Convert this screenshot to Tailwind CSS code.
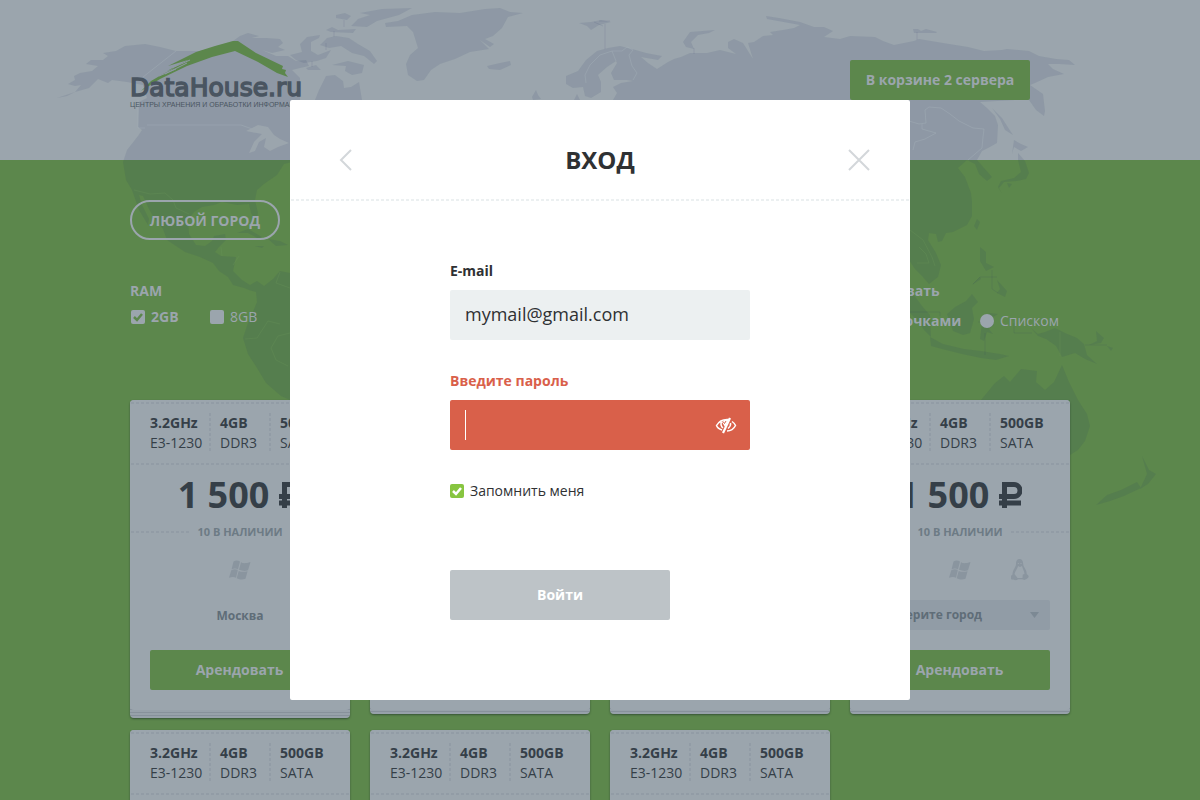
<!DOCTYPE html>
<html lang="ru">
<head>
<meta charset="utf-8">
<meta name="viewport" content="width=device-width, initial-scale=1">
<title>DataHouse.ru — Вход</title>
<script src="https://cdn.jsdelivr.net/npm/@tailwindcss/browser@4"></script>
</head>
<body class="h-screen overflow-hidden bg-[#5c874c] font-['Open_Sans','Noto_Sans',sans-serif] text-sm leading-5 text-[#353f48]">

<div class="relative h-full overflow-hidden">
  <!-- World map behind the header and the listing -->
  <div class="absolute inset-x-0 top-0 h-40 bg-[#9ba5ad]"></div>
  <svg class="absolute top-0 left-1/2 -translate-x-1/2" width="1200" height="800" viewBox="0 0 1200 800" aria-hidden="true">
    <g fill="#263560" fill-opacity=".11">
      <path d="M57 98L67 96L75 92L81 85L75 86L68 84L75 80L74 76L80 73L92 71L98 66L86 64L91 60L103 60L108 56L103 53L116 51L125 46L145 44L160 47L176 51L200 51L215 47L233 41L240 36L248 33L259 36L252 38L266 38L280 39L283 43L278 47L285 50L272 53L262 50L276 56L288 56L296 61L306 60L309 66L300 68L292 70L300 78L300 94L300 160L284 164L277 175L264 184L257 190L255 200L258 213L256 221L251 213L249 204L237 205L222 202L214 205L202 207L194 212L188 220L189 234L196 245L205 246L212 241L214 236L225 234L226 240L219 247L215 252L221 256L236 257L233 271L242 280L250 285L257 281L264 286L273 279L280 271L290 273L290 400L281 396L266 383L257 368L248 354L243 338L248 323L252 314L257 302L256 292L249 290L244 288L233 285L228 277L219 271L213 263L200 257L185 252L167 240L163 229L154 218L149 209L143 196L139 195L142 205L149 219L148 225L139 210L132 190L126 180L123 162L127 150L138 136L142 130L138 127L139 102L147 98L143 85L127 82L112 80L108 83L98 79L89 88L75 92Z"/>
      <path d="M315 100L319 90L326 76L335 75L343 81L344 88L351 87L359 82L362 100Z"/>
      <path d="M385 23L398 21L412 15L435 12L460 13L485 9L500 8L510 12L523 13L508 17L502 28L493 36L485 39L494 44L490 47L480 40L489 49L470 52L455 59L440 64L431 70L424 80L417 81L408 75L406 64L410 55L418 48L413 32L407 26L386 27Z"/>
      <path d="M336 15L345 13L351 16L347 20L336 18ZM360 13L382 9L412 8L399 15L377 21L367 27L351 26L358 19L370 15ZM326 30L332 27L338 30L356 29L353 33L331 32ZM320 45L327 38L336 36L349 38L358 44L370 51L377 61L374 64L364 56L352 53L341 46L329 48ZM290 55L302 52L300 44L307 37L320 35L319 38L311 42L311 51L318 55L331 50L326 58L317 61L304 63L296 60ZM332 65L348 61L364 65L362 73L352 75L345 71L346 66ZM306 68L316 65L321 70L308 70Z"/>
      <path d="M487 66L500 63L510 61L511 65L500 70L489 69ZM579 23L591 22L601 20L611 22L599 25L591 30L587 26ZM532 97L536 90L538 95L541 99L533 100Z"/>
      <path d="M566 76L578 71L586 60L597 51L608 48L620 46L632 49L646 53L662 56L658 60L641 57L648 63L657 69L668 62L674 59L681 57L690 53L707 53L720 50L736 54L728 48L728 42L734 39L743 43L748 51L753 59L748 43L754 42L763 36L773 35L770 32L783 30L794 28L800 25L767 19L766 16L779 18L800 22L814 27L824 27L833 31L824 37L840 39L850 36L875 37L883 41L894 45L914 41L919 39L943 43L968 47L984 51L1002 50L1007 49L1029 51L1039 56L1056 59L1069 60L1075 65L1059 64L1048 64L1053 69L1064 74L1048 77L1035 83L1030 85L1043 94L1045 111L1044 116L1036 110L1029 100L1015 100L980 102L987 108L995 116L998 125L997 143L988 148L982 151L977 160L984 168L992 177L987 181L979 174L975 164L967 160L958 168L965 177L971 193L972 202L972 216L967 225L953 232L946 233L942 241L938 242L936 234L929 233L928 240L936 253L941 265L938 277L929 284L922 276L915 269L909 260L909 100L824 100L613 100L617 93L613 87L621 83L633 81L627 80L614 80L611 73L617 63L616 61L607 67L598 75L601 82L601 92L591 98L585 96L583 87L573 88L566 84Z"/>
      <path d="M574 100L577 94L580 100ZM683 42L690 32L715 30L709 33L698 35L691 42L694 49L686 47ZM913 29L918 29L921 31L926 29L937 32L936 33L914 33Z"/>
      <path d="M992 108L1002 118L1009 129L1013 135L1005 130L1000 119ZM1014 140L1021 144L1028 147L1021 151L1014 147L1012 154ZM1018 153L1025 161L1029 173L1026 179L1017 181L1004 182L999 188L1002 194L998 187L1001 181L1014 178L1021 172L1018 160ZM1007 183L1012 184L1009 188ZM977 219L980 222L977 230L974 226ZM980 247L986 252L986 263L994 267L986 271L980 261ZM997 280L1007 291L1005 297L997 293L1000 289ZM972 285L980 277L981 279Z"/>
      <path d="M909 295L914 295L922 306L930 315L931 337L924 330L917 320L909 312ZM930 337L943 344L964 349L981 351L1000 354L1009 356L996 360L981 358L962 354L942 349L931 346ZM947 314L955 307L966 301L972 294L978 302L972 308L974 319L970 333L963 335L953 331ZM981 331L983 317L990 313L998 314L990 319L994 325L989 329L993 334L987 332L984 341L980 339Z"/>
      <path d="M1031 328L1038 334L1045 332L1055 328L1065 333L1077 338L1084 344L1087 355L1097 364L1085 359L1075 353L1062 357L1056 346L1046 339L1038 336ZM1096 331L1104 338L1101 343L1089 345L1097 341ZM1107 346L1113 348L1111 351Z"/>
      <path d="M981 400L995 383L1004 376L1010 382L1021 369L1037 371L1036 382L1045 390L1054 382L1062 365L1069 382L1078 400L1087 414L1090 426L1085 441L1078 450L1070 455L1000 455L970 430ZM1142 456L1149 470L1156 474L1148 484L1140 489L1147 474ZM1137 482L1141 488L1124 496L1110 501L1096 505L1107 495L1121 490Z"/>
      <path d="M237 233L248 229L262 237L259 239L248 233ZM268 239L280 241L288 245L276 246ZM255 246L264 246L262 248Z"/>
    </g>
    <g fill="none" stroke="#263560" stroke-opacity=".1">
      <path d="M605 24V49M594 22L603 26M610 21H599M344 20V27M334 31V37M326 43V50M312 61V67M694 48V54M917 32V40M1014 323V333H1032M1085 345H1100L1107 345M985 333V355M973 284L980 277H997M992 270V289L998 293M909 312H940V316M978 322H990"/>
    </g>
    <g fill="none" stroke="#a5b1b9" stroke-opacity=".4">
      <path d="M176 51L143 77M147 125L241 125L255 130M138 100V128H145"/>
      <path d="M586 83L585 75L590 65L600 55L612 51L622 51L627 47L633 50L629 55L632 66L637 73L633 80M612 51L616 61"/>
      <path d="M909 121L919 124L926 123L925 110L929 107L941 108L950 114L959 121L973 128L984 129L983 137L982 148L968 160M922 124L922 129L936 133L925 139L915 142L913 150"/>
    </g>
    <g fill="none" stroke="#6b965b" stroke-opacity=".3">
      <path d="M134 190L150 194L165 193L173 200L176 208L189 214M221 247L222 256M239 256L233 265M280 272L276 283L290 288M245 339L257 338L268 321L280 324M290 333L278 336L271 348L276 360L288 366M1060 332V356M910 230L923 240L932 257L935 266M919 247L926 254L929 263L917 263"/>
    </g>
    <path fill="#9ba5ad" d="M246 131L258 125L268 127L274 135L280 139L289 143L278 147L270 151L264 147L266 138L259 142L255 151L249 153L254 142L262 134Z"/>
  </svg>

  <div class="relative mx-auto w-full max-w-[940px]">
    <header class="flex h-40 items-start justify-between">
      <a href="#" class="relative block pt-[73px] text-[#4a5561]" aria-label="DataHouse.ru">
        <svg class="absolute top-10 left-0" width="170" height="55" viewBox="130 40 170 55" aria-hidden="true">
          <path fill="#5c874c" d="M141 91L151 81L163 74L175 68L167 71L188 60L168 66L196 52L215 46L233 41L238 41L256 53L283 66L282 69L286 70L285 73L288 77L277 73L258 62L235 51L212 57L187 66L160 79Z"/>
          <path stroke="#8e98a4" d="M165 74L187 63M172 68L190 60M159 76L176 69"/>
        </svg>
        <span class="relative block font-['DejaVu_Sans',sans-serif] text-[25px] leading-[29px] [-webkit-text-stroke:1.5px_currentColor]">DataHouse.ru</span>
        <span class="relative block font-['Liberation_Sans',sans-serif] text-[7px] leading-[6px] whitespace-nowrap">ЦЕНТРЫ ХРАНЕНИЯ И ОБРАБОТКИ ИНФОРМАЦИИ</span>
      </a>
      <button class="mt-15 mr-10 h-10 w-45 rounded-xs bg-[#5c874c] font-bold text-[#9ba5ad]">В корзине 2 сервера</button>
    </header>

    <section class="h-60 pt-10 text-[#9ba5ad]">
      <button class="h-10 w-[150px] rounded-full border-2 border-[#9ba5ad] pt-[2px] font-bold">ЛЮБОЙ ГОРОД</button>
      <div class="mt-10 flex justify-between">
        <fieldset>
          <legend class="pt-px font-bold">RAM</legend>
          <div class="flex pt-[6px]">
            <label class="relative flex w-20 items-center gap-[6px] font-bold">
              <input type="checkbox" checked class="absolute left-0 size-[14px] appearance-none">
              <svg width="15" height="14" viewBox="0 0 15 14" aria-hidden="true"><rect x="1" width="14" height="14" rx="2" fill="#9ba5ad"/><path d="M4 7L7 10L12 4" fill="none" stroke="#5c874c" stroke-width="2.500"/></svg>
              2GB
            </label>
            <label class="flex items-center gap-[6px]">
              <input type="checkbox" class="size-[14px] appearance-none rounded-xs bg-[#9ba5ad]">
              8GB
            </label>
          </div>
        </fieldset>
        <fieldset class="w-[220px]">
          <legend class="pt-px font-bold">Показывать</legend>
          <div class="flex justify-between pt-[10px] pr-[11px]">
            <label class="flex items-center gap-[6px] font-bold">
              <input type="radio" name="view" checked class="size-[14px] appearance-none rounded-full bg-[#9ba5ad]">
              Карточками
            </label>
            <label class="flex items-center gap-[6px]">
              <input type="radio" name="view" class="size-[14px] appearance-none rounded-full bg-[#9ba5ad]">
              Списком
            </label>
          </div>
        </fieldset>
      </div>
    </section>

    <main id="cards" class="grid grid-cols-4 gap-5"></main>
  </div>
</div>

<template id="card">
  <article class="relative h-[310px]">
    <div data-stack class="absolute inset-x-0 top-0 rounded-sm bg-[repeating-linear-gradient(to_top,#97a1aa_0_2px,#87919b_2px_3px)] shadow-[0_1px_2px_rgba(30,50,40,0.6)]"></div>
    <div class="relative h-full rounded-sm bg-[#9ba5ad] pt-[2px]">
      <div class="mx-px h-[2px] bg-[repeating-linear-gradient(to_right,#929ca6_0_3px,transparent_3px_5px)]"></div>
      <div class="flex h-[59px] px-5 pt-[9px]">
        <div class="w-[59px]"><b>3.2GHz</b><br>E3-1230</div>
        <div class="h-[38px] w-[2px] bg-[repeating-linear-gradient(to_bottom,#929ca6_0_3px,transparent_3px_5px)]"></div>
        <div class="w-[58px] pl-[9px]"><b>4GB</b><br>DDR3</div>
        <div class="h-[38px] w-[2px] bg-[repeating-linear-gradient(to_bottom,#929ca6_0_3px,transparent_3px_5px)]"></div>
        <div class="pl-[9px]"><b>500GB</b><br>SATA</div>
      </div>
      <div class="mx-px h-[2px] bg-[repeating-linear-gradient(to_right,#929ca6_0_3px,transparent_3px_5px)]"></div>
      <div class="flex h-[57px] items-center justify-center gap-[10px] pt-[2px] text-4xl font-bold">1 500
        <svg width="23" height="26" viewBox="0 0 23 26" role="img" aria-label="₽"><path d="M5.500 26V2.500H15a5.500 5.500 0 0 1 0 12H0M0 21H22" fill="none" stroke="currentColor" stroke-width="5"/></svg>
      </div>
      <div class="flex items-center gap-2 px-px text-[11px] font-bold text-[#6d7b85]">
        <span class="h-[2px] flex-1 bg-[repeating-linear-gradient(to_right,#929ca6_0_3px,transparent_3px_5px)]"></span>10 В НАЛИЧИИ<span class="h-[2px] flex-1 bg-[repeating-linear-gradient(to_right,#929ca6_0_3px,transparent_3px_5px)]"></span>
      </div>
      <div class="flex h-[58px] items-center pb-[2px] pl-[99px] text-[#8a959f]">
        <svg width="22" height="20" viewBox="0 0 22 20" fill="currentColor" aria-hidden="true"><path d="M4.500 1.500C7 .1 9 .4 11 1.500L9 9.300C7 8.200 5 8.200 2.600 9.300ZM12 2.300C14 3.500 17 3.500 21.500 2L19 10.300C16 11.500 13 11 10 9.800ZM2.300 10.300C4.500 9.100 7 9.100 8.800 10.100L7 17.800C5 16.700 3 16.700 0 17.800ZM9.700 10.900C12 12 15 12.200 18.600 11.300L16.500 18.800C13 20 11 19.800 7.700 18.300Z"/></svg>
        <svg data-linux class="ml-10" width="18" height="22" viewBox="1 0 18 22" aria-hidden="true"><path fill="currentColor" d="M9.500 0C12 0 13.200 2 13.200 5C13.200 8 17 11 16.700 15C19.500 17 19.500 18.500 15.500 20.500C14 21.500 13 20.500 12 20.300H8C6 22 4 21 1 20.300C.5 18 .5 17 2.500 15.500C2.500 11 6 8 6 5C6 2 7 0 9.500 0Z"/><path fill="#9ba5ad" d="M8 7L10 8L12 7C12.500 10 14.500 12 14.500 15L12.800 15.500L12.500 19H7.500L4.500 15C5 12 7.500 10 8 7Z"/><path fill="#9ba5ad" d="M7.800 4h1v1h-1zM10.500 4h1v1h-1z"/></svg>
      </div>
      <div data-city class="h-[30px] px-5 text-center text-xs leading-8 font-bold text-[#5f6d78]"></div>
      <div class="px-5 pt-5"><button class="h-10 w-full rounded-xs bg-[#5c874c] pr-px font-bold text-[#9ba5ad]">Арендовать</button></div>
    </div>
  </article>
</template>

<!-- Sign-in dialog -->
<div class="fixed inset-0 flex items-center justify-center">
  <form role="dialog" aria-modal="true" aria-labelledby="title" class="h-[600px] w-[620px] rounded-xs bg-white text-[#2f3133]">
    <div class="flex h-[99px] items-center justify-between px-10 pt-5">
      <button type="button" aria-label="Назад" class="w-[22px]"><svg class="ml-[9px]" width="13" height="22" viewBox="0 0 13 22" fill="none" stroke="#d3d7da" stroke-width="2"><path d="M12 1L2 11L12 21"/></svg></button>
      <h1 id="title" class="text-2xl font-bold">ВХОД</h1>
      <button type="button" aria-label="Закрыть"><svg width="22" height="22" viewBox="0 0 22 22" fill="none" stroke="#d3d7da" stroke-width="2"><path d="M1 1L21 21M21 1L1 21"/></svg></button>
    </div>
    <div class="h-[2px] bg-[repeating-linear-gradient(to_right,transparent_0_1px,#ecf0f1_1px_4px,transparent_4px_5px)]"></div>
    <div class="ml-40 w-[300px] pt-15">
      <label for="email" class="block font-bold">E-mail</label>
      <input id="email" type="email" value="mymail@gmail.com" class="mt-[9px] block h-[50px] w-full rounded-xs bg-[#ecf0f1] px-[15px] pb-[2px] text-lg">
      <label for="password" class="mt-[30px] block pt-px font-bold text-[#d9604a]">Введите пароль</label>
      <div class="mt-[9px] flex h-[50px] items-center rounded-xs bg-[#d9604a] px-[15px]">
        <span class="h-[30px] w-px bg-white"></span>
        <input id="password" type="password" class="h-full min-w-0 flex-1 text-lg text-white outline-none">
        <button type="button" aria-label="Показать пароль" class="-mr-[2px]"><svg width="22" height="18" viewBox="0 0 22 18" fill="none" stroke="#fff" stroke-width="1.500"><path d="M7 14C4 13 2 11 1.500 9.500C4 5 9 3 14 3.500M12 15C16 15 19 12.500 20.500 9.500C20 8 18.500 6.500 17 5.500M6.500 5.500C5.500 8.500 6 10.500 8 12M15.500 7C16 9.500 15 11 13 12.500"/><path stroke-width="2.200" d="M8 17L15 2"/><path fill="#fff" stroke="none" d="M7 6L10 11L14 3L9 4Z"/><path stroke="#d9604a" stroke-width="1" d="M8 5.500L9.500 7.500L11 5"/></svg></button>
      </div>
      <label class="relative mt-[31px] flex items-center gap-[6px]">
        <input type="checkbox" checked class="absolute left-0 size-[14px] appearance-none">
        <svg width="14" height="14" viewBox="0 0 14 14" aria-hidden="true"><rect width="14" height="14" rx="2" fill="#87c540"/><path d="M3 7L6 10L11 4" fill="none" stroke="#fff" stroke-width="2.500"/></svg>
        Запомнить меня
      </label>
      <button type="submit" class="mt-[69px] h-[50px] w-[220px] rounded-xs bg-[#bdc3c7] font-bold text-white">Войти</button>
    </div>
  </form>
</div>

<script>
  const list = document.getElementById('cards');
  const tpl = document.getElementById('card');
  const select = '<select aria-label="Город" class="block h-[30px] w-full appearance-none rounded-xs bg-[#919ca6] pl-[10px] leading-[30px]"><option>Выберите город</option></select><svg class="pointer-events-none absolute top-3 right-[31px]" width="9" height="6" viewBox="0 0 9 6"><path d="M0 0H9L4.500 6Z" fill="#7c8994"/></svg>';
  for (let i = 0; i < 7; i++) {
    const card = tpl.content.cloneNode(true);
    card.querySelector('[data-stack]').style.height = (i === 0 ? 318 : 314) + 'px';
    const city = card.querySelector('[data-city]');
    if (i % 4 === 0) {
      city.textContent = 'Москва';
      card.querySelector('[data-linux]').remove();
    } else {
      city.classList.add('relative');
      city.innerHTML = select;
    }
    list.append(card);
  }
</script>
</body>
</html>
